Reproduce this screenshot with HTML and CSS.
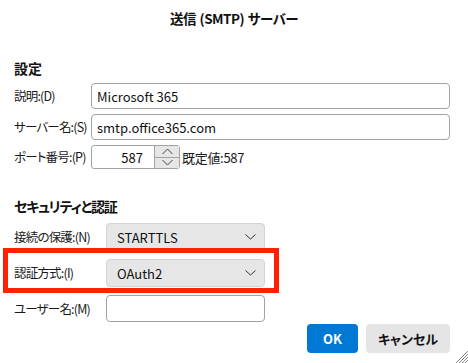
FILE: index.html
```html
<!DOCTYPE html>
<html lang="ja">
<head>
    <meta charset="UTF-8">
    <meta name="viewport" content="width=device-width, initial-scale=1.0">
    <title>送信 (SMTP) サーバー</title>
    <link rel="stylesheet" href="styles.css">
</head>
<body>
    <div class="dialog">
        <div class="dialog-title">送信 (SMTP) サーバー</div>

        <div class="dialog-body">
            <h2 class="section-title">設定</h2>
            <div class="form-grid general">
                <label class="field-label">説明:(D)</label>
                <input class="text-input" type="text" value="Microsoft 365">

                <label class="field-label">サーバー名:(S)</label>
                <input class="text-input" type="text" value="smtp.office365.com">

                <label class="field-label">ポート番号:(P)</label>
                <div class="port-row">
                    <div class="spin-box">
                        <input class="spin-value" type="text" value="587">
                        <div class="spin-buttons">
                            <span class="spin-btn">
                                <svg width="11" height="7" viewBox="0 0 11 7"><path d="M0.5 6 L5.5 1 L10.5 6" fill="none" stroke="#444" stroke-width="1"/></svg>
                            </span>
                            <span class="spin-btn">
                                <svg width="11" height="7" viewBox="0 0 11 7"><path d="M0.5 1 L5.5 6 L10.5 1" fill="none" stroke="#444" stroke-width="1"/></svg>
                            </span>
                        </div>
                    </div>
                    <span class="default-value">既定値:587</span>
                </div>
            </div>

            <h2 class="section-title security">セキュリティと認証</h2>
            <div class="form-grid security-grid">
                <label class="field-label">接続の保護:(N)</label>
                <div class="select-box">
                    <span>STARTTLS</span>
                    <svg width="11" height="6" viewBox="0 0 11 6"><path d="M0.5 0.5 L5.5 5 L10.5 0.5" fill="none" stroke="#333" stroke-width="1"/></svg>
                </div>

                <label class="field-label">認証方式:(I)</label>
                <div class="select-box">
                    <span>OAuth2</span>
                    <svg width="11" height="6" viewBox="0 0 11 6"><path d="M0.5 0.5 L5.5 5 L10.5 0.5" fill="none" stroke="#333" stroke-width="1"/></svg>
                </div>

                <label class="field-label">ユーザー名:(M)</label>
                <input class="text-input user" type="text" value="">
            </div>

            <div class="button-row">
                <button type="button" class="btn btn-primary">OK</button>
                <button type="button" class="btn btn-secondary">キャンセル</button>
            </div>
        </div>

        <!-- highlight drawn over the auth row -->
        <div class="highlight"></div>

        <svg class="resize-grip" width="14" height="14" viewBox="0 0 14 14">
            <path d="M14 2 L2 14 M14 5 L5 14 M14 8 L8 14 M14 11 L11 14" stroke="#8a8a8a" stroke-width="1" fill="none"/>
        </svg>
    </div>
</body>
</html>
```

FILE: styles.css
```css
/* Base */
body {
    margin: 0;
    background-color: #fff;
    font-family: "Noto Sans CJK JP", "Noto Sans", sans-serif;
    font-feature-settings: "palt";
    font-size: 13px;
    color: #1a1a1a;
}

.dialog {
    position: relative;
    width: 468px;
    height: 363px;
    overflow: hidden;
    background-color: #fff;
}

/* Title */
.dialog-title {
    padding-top: 8px;
    line-height: 20px;
    font-size: 13.5px;
    font-weight: 700;
    letter-spacing: -0.5px;
    word-spacing: 1px;
    text-align: center;
    color: #111;
}

.dialog-body {
    padding: 0 18px 0 14px;
}

/* Section headings */
.section-title {
    margin: 30px 0 5px;
    line-height: 20px;
    font-size: 14px;
    font-weight: 700;
    color: #111;
}

.section-title.security {
    margin-top: 27px;
    margin-bottom: 7px;
    letter-spacing: -1.2px;
}

/* Form grids */
.form-grid {
    display: grid;
    align-items: center;
}

.form-grid.general {
    grid-template-columns: 77px 1fr;
    grid-template-rows: 26px 26px 24px;
    row-gap: 5px;
}

.form-grid.security-grid {
    grid-template-columns: 92px 159px;
    grid-template-rows: 28px 28px 27px;
    row-gap: 8px;
}

.field-label {
    white-space: nowrap;
    line-height: 18px;
    font-size: 12.5px;
    letter-spacing: -0.8px;
}

.text-input {
    height: 100%;
    box-sizing: border-box;
    padding: 0 5px;
    border: 1px solid #a3a3a3;
    border-radius: 4px;
    font: inherit;
    color: #111;
    background-color: #fff;
    outline: none;
}

/* Port spin box */
.port-row {
    display: flex;
    align-items: center;
    height: 100%;
}

.spin-box {
    display: flex;
    width: 89px;
    height: 100%;
    box-sizing: border-box;
    border: 1px solid #a3a3a3;
    border-radius: 3px;
}

.spin-value {
    width: 62px;
    box-sizing: border-box;
    padding: 0 11px 0 0;
    border: none;
    text-align: right;
    font: inherit;
    color: #111;
    background: transparent;
    outline: none;
}

.spin-buttons {
    flex: 1;
    display: flex;
    flex-direction: column;
    border-left: 1px solid #a3a3a3;
}

.spin-btn {
    flex: 1;
    display: flex;
    align-items: center;
    justify-content: center;
    background-color: #e6e6e6;
}

.spin-btn + .spin-btn {
    border-top: 1px solid #a3a3a3;
}

.default-value {
    margin-left: 2px;
    letter-spacing: -0.3px;
}

/* Dropdowns */
.select-box {
    display: flex;
    align-items: center;
    justify-content: space-between;
    height: 100%;
    box-sizing: border-box;
    padding: 0 8px 0 10px;
    border: 1px solid #d4d4d4;
    border-radius: 4px;
    background-color: #e6e6e6;
    color: #111;
}

.text-input.user {
    width: 159px;
}

/* Buttons */
.button-row {
    display: flex;
    justify-content: flex-end;
    gap: 8px;
    margin-top: 2px;
}

.btn {
    height: 29px;
    border: none;
    border-radius: 4px;
    font-family: inherit;
    font-feature-settings: "palt";
    font-size: 13px;
    font-weight: 700;
}

.btn-primary {
    width: 51px;
    background-color: #0078d4;
    color: #fff;
}

.btn-secondary {
    width: 84px;
    background-color: #e5e5e5;
    color: #111;
}

/* Overlays */
.highlight {
    position: absolute;
    left: 3px;
    top: 248px;
    width: 276px;
    height: 45px;
    box-sizing: border-box;
    border: 5px solid #ff2200;
}

.resize-grip {
    position: absolute;
    right: 0;
    bottom: 0;
}
```
